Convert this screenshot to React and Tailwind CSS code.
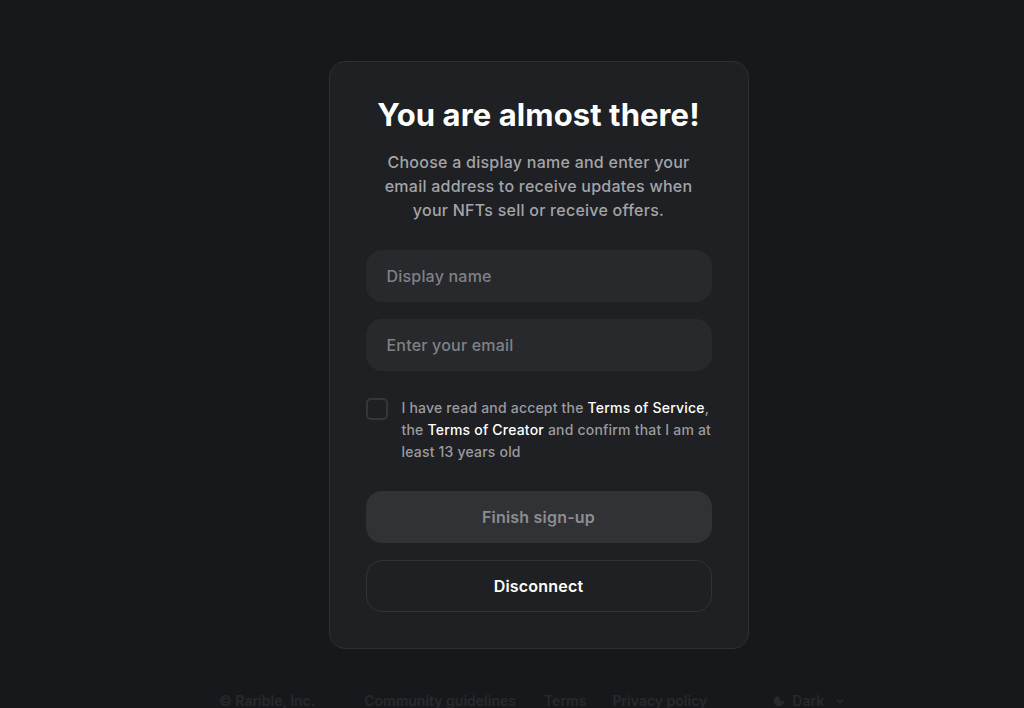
import React, { useState } from 'react'

const App = () => {
  const [checked, setChecked] = useState(false)

  return (
    <div className="min-h-screen bg-[#17181b] overflow-hidden" style={{ fontFamily: 'Inter, "Noto Sans", sans-serif' }}>
      <div className="h-[708px] flex flex-col">
        {/* Modal card */}
        <div className="flex justify-center pl-[53px]">
          <div className="mt-[61px] w-[420px] bg-[#1f2023] border border-[#2d2f33] rounded-2xl px-9 pt-[35px] pb-9 flex flex-col">
            <h1 className="text-center text-[31px] leading-9 font-bold text-white tracking-[0.1px]">
              You are almost there!
            </h1>
            <p className="mt-[17px] px-[12px] text-center text-[16px] leading-6 font-medium text-[#a3a4a8] tracking-[0.25px]">
              Choose a display name and enter your email address to receive updates when your NFTs sell or receive offers.
            </p>

            <div className="mt-[28px] flex flex-col gap-[17px]">
              <input
                placeholder="Display name"
                className="h-[52px] rounded-2xl bg-[#27292c] px-[21px] text-[16px] font-medium text-white placeholder:text-[#808186] outline-none tracking-[0.2px]"
              />
              <input
                placeholder="Enter your email"
                className="h-[52px] rounded-2xl bg-[#27292c] px-[21px] text-[16px] font-medium text-white placeholder:text-[#808186] outline-none tracking-[0.2px]"
              />
            </div>

            {/* Terms */}
            <label className="mt-[26px] flex gap-[14px] cursor-pointer">
              <input type="checkbox" checked={checked} onChange={() => setChecked(!checked)} className="hidden" />
              <span className="mt-px w-[22px] h-[22px] shrink-0 rounded-[5px] border-2 border-[#34363a]" />
              <span className="text-[14px] leading-[22px] font-medium text-[#9a9b9f] tracking-[0.2px]">
                I have read and accept the <span className="text-white">Terms of Service</span>, the <span className="text-white">Terms of Creator</span> and confirm that I am at least 13 years old
              </span>
            </label>

            <div className="mt-[28px] flex flex-col gap-[17px]">
              <button className="h-[52px] rounded-2xl bg-[#313236] text-[16px] font-semibold text-[#8c8d91] tracking-[0.2px]">
                Finish sign-up
              </button>
              <button className="h-[52px] rounded-2xl border border-[#303236] text-[16px] font-semibold text-white tracking-[0.2px]">
                Disconnect
              </button>
            </div>
          </div>
        </div>

        {/* Footer (dimmed under overlay) */}
        <div className="mt-[42px] flex items-center text-[14px] font-semibold text-[#27292d] leading-5">
          <span className="ml-[219px]">© Rarible, Inc.</span>
          <span className="ml-[49px]">Community guidelines</span>
          <span className="ml-[28px]">Terms</span>
          <span className="ml-[26px]">Privacy policy</span>
          <span className="ml-[65px] flex items-center">
            <svg width="14" height="14" viewBox="0 0 24 24" fill="currentColor">
              <path d="M12 3a9 9 0 1 0 9 9 7 7 0 0 1-9-9z" />
            </svg>
            <span className="ml-[6px]">Dark</span>
            <svg width="12" height="12" viewBox="0 0 24 24" fill="none" stroke="currentColor" strokeWidth="2.5" strokeLinecap="round" strokeLinejoin="round" className="ml-[10px]">
              <path d="m6 9 6 6 6-6" />
            </svg>
          </span>
        </div>
      </div>
    </div>
  )
}

export default App
